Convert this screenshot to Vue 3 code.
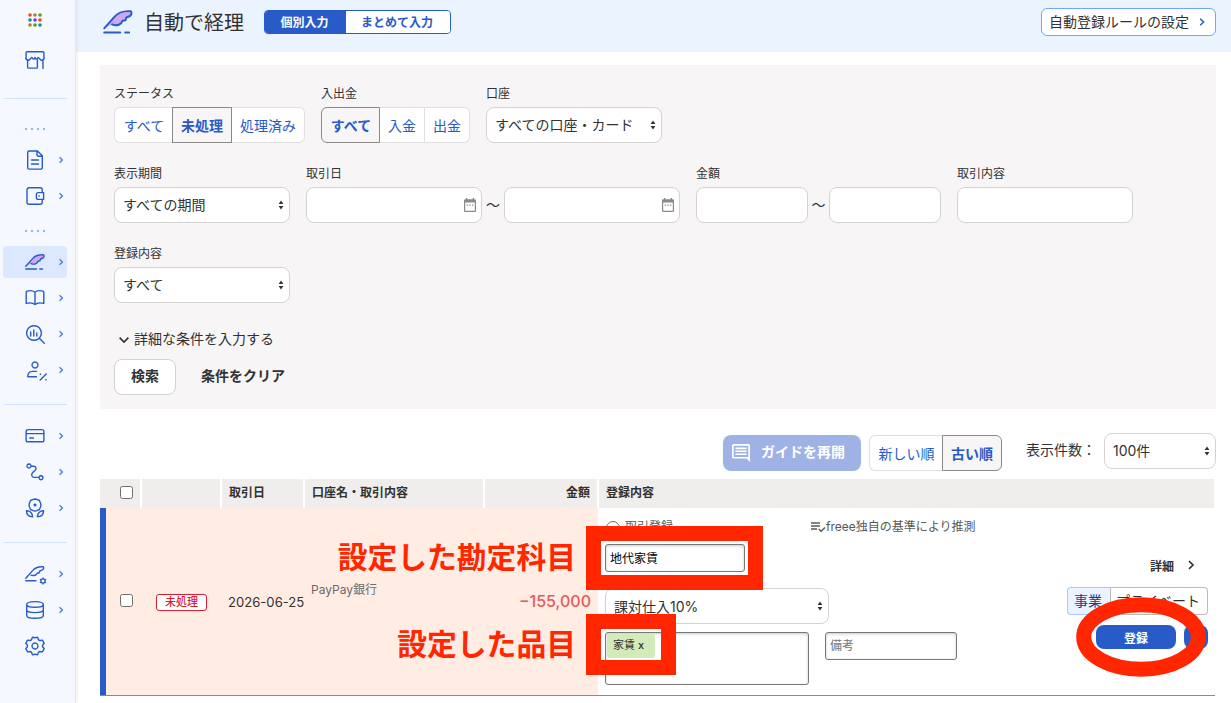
<template>
  <div class="app">
    <!-- ===== サイドバー ===== -->
    <nav class="sidebar">
      <svg class="launcher" viewBox="0 0 14 14">
        <circle v-for="(c, i) in dots" :key="i" :cx="2 + (i % 3) * 5" :cy="2 + Math.floor(i / 3) * 5" r="1.8" :fill="c" />
      </svg>
      <svg class="icon store" viewBox="0 0 20 20"><path :d="icons.store" /></svg>
      <hr />
      <template v-for="(group, g) in menu" :key="g">
        <div v-if="group.label" class="group-dots"><i v-for="n in 4" :key="n"></i></div>
        <hr v-else-if="g > 0" />
        <ul>
          <li v-for="name in group.items" :key="name" :class="{ active: name === 'pen' }">
            <svg class="icon" viewBox="0 0 20 20">
              <path :d="icons[name]" :class="{ wing: name === 'pen' }" />
              <path v-if="name === 'pen'" d="M.8 17h10.7M14.8 17h2.6" />
            </svg>
            <svg v-if="name !== 'gear'" class="arrow" viewBox="0 0 6 8"><path d="M1.6 1.2 4.4 4 1.6 6.8" /></svg>
          </li>
        </ul>
      </template>
    </nav>

    <div class="main">
      <!-- ===== ヘッダー ===== -->
      <header class="page-header">
        <svg class="icon logo" viewBox="0 0 20 20">
          <path :d="icons.pen" class="wing" />
          <path d="M.8 17h10.7M14.8 17h2.6" />
        </svg>
        <h1>自動で経理</h1>
        <div class="mode">
          <button
            v-for="m in modes"
            :key="m"
            :class="{ active: mode === m }"
            @click="mode = m"
          >{{ m }}</button>
        </div>
        <button class="rule-link">
          自動登録ルールの設定
          <svg class="arrow" viewBox="0 0 6 8"><path d="M1.2 .8 4.6 4 1.2 7.2" /></svg>
        </button>
      </header>

      <!-- ===== 検索条件 ===== -->
      <section class="filters">
        <div class="filter-row">
          <div class="field">
            <label>ステータス</label>
            <div class="segment">
              <button v-for="s in statuses" :key="s" :class="{ active: status === s }" @click="status = s">{{ s }}</button>
            </div>
          </div>
          <div class="field">
            <label>入出金</label>
            <div class="segment">
              <button v-for="s in flows" :key="s" :class="{ active: flow === s }" @click="flow = s">{{ s }}</button>
            </div>
          </div>
          <div class="field">
            <label>口座</label>
            <div class="select">すべての口座・カード<svg class="updown" viewBox="0 0 6 10"><path d="M3 .5 5.4 4H.6zM3 9.5 5.4 6H.6z" /></svg></div>
          </div>
        </div>

        <div class="filter-row">
          <div class="field">
            <label>表示期間</label>
            <div class="select">すべての期間<svg class="updown" viewBox="0 0 6 10"><path d="M3 .5 5.4 4H.6zM3 9.5 5.4 6H.6z" /></svg></div>
          </div>
          <div class="field">
            <label>取引日</label>
            <div class="range">
              <div class="select date"><svg class="cal" viewBox="0 0 12 14"><path :d="calendar" fill-rule="evenodd" /></svg></div>
              <span class="tilde">〜</span>
              <div class="select date"><svg class="cal" viewBox="0 0 12 14"><path :d="calendar" fill-rule="evenodd" /></svg></div>
            </div>
          </div>
          <div class="field">
            <label>金額</label>
            <div class="range">
              <input class="amount-input" type="text" />
              <span class="tilde narrow">〜</span>
              <input class="amount-input" type="text" />
            </div>
          </div>
          <div class="field">
            <label>取引内容</label>
            <input class="text-input" type="text" />
          </div>
        </div>

        <div class="filter-row">
          <div class="field">
            <label>登録内容</label>
            <div class="select">すべて<svg class="updown" viewBox="0 0 6 10"><path d="M3 .5 5.4 4H.6zM3 9.5 5.4 6H.6z" /></svg></div>
          </div>
        </div>

        <div class="more">
          <svg viewBox="0 0 12 8"><path d="M1.6 1.6 6 6l4.4-4.4" /></svg>
          詳細な条件を入力する
        </div>
        <div class="filter-actions">
          <button class="search">検索</button>
          <button class="clear">条件をクリア</button>
        </div>
      </section>

      <!-- ===== ツールバー ===== -->
      <div class="toolbar">
        <button class="guide">
          <svg viewBox="0 0 18 18"><path fill-rule="evenodd" d="M1.6 0h14.8Q18 0 18 1.6V18l-3.4-3.4h-13Q0 14.6 0 13V1.6Q0 0 1.6 0zM1.7 1.7v11.2h14.6V1.7zM3.4 3.6h11.2v1.6H3.4zM3.4 6.5h11.2v1.6H3.4zM3.4 9.4h11.2V11H3.4z" /></svg>
          ガイドを再開
        </button>
        <div class="segment">
          <button v-for="s in orders" :key="s" :class="{ active: order === s }" @click="order = s">{{ s }}</button>
        </div>
        <span class="count-label">表示件数：</span>
        <div class="select count">100件<svg class="updown" viewBox="0 0 6 10"><path d="M3 .5 5.4 4H.6zM3 9.5 5.4 6H.6z" /></svg></div>
      </div>

      <!-- ===== 明細テーブル ===== -->
      <div class="table">
        <div class="thead">
          <div class="check"><input type="checkbox" /></div>
          <div></div>
          <div>取引日</div>
          <div>口座名・取引内容</div>
          <div class="right">金額</div>
          <div>登録内容</div>
        </div>
        <div class="trow">
          <div class="check"><input type="checkbox" /></div>
          <div class="state"><span class="badge">未処理</span></div>
          <div class="date-cell">2026-06-25</div>
          <div class="bank">PayPay銀行</div>
          <div class="amount">−155,000</div>
          <div class="entry">
            <div class="entry-form">
              <div class="entry-top">
                <span class="radio"></span>
                <span class="kind">取引登録</span>
                <svg viewBox="0 0 16 12"><path d="M1 2h9M1 5h9M1 8h6M8.8 8l2.3 2.3L15 6.4" /></svg>
                <span>freee独自の基準により推測</span>
              </div>
              <input class="account" type="text" v-model="account" />
              <div class="select tax">課対仕入10%<svg class="updown" viewBox="0 0 6 10"><path d="M3 .5 5.4 4H.6zM3 9.5 5.4 6H.6z" /></svg></div>
              <div class="entry-bottom">
                <div class="tags"><span class="tag">家賃 <b>x</b></span></div>
                <input class="memo" type="text" placeholder="備考" />
              </div>
            </div>
            <div class="entry-side">
              <div class="detail">詳細<svg viewBox="0 0 8 10"><path d="M2 1.2 6 5 2 8.8" /></svg></div>
              <div class="owner"><span class="active">事業</span><span>プライベート</span></div>
              <div class="submit">
                <button class="register">登録</button>
                <button class="dropdown"></button>
              </div>
            </div>
          </div>

          <!-- 赤い注釈 -->
          <span class="note note-account">設定した勘定科目</span>
          <span class="note note-item">設定した品目</span>
          <span class="frame frame-account"></span>
          <span class="frame frame-item"></span>
          <svg class="ring" viewBox="0 0 130 80"><ellipse cx="65" cy="40" rx="57.3" ry="32.2" /></svg>
        </div>
      </div>
    </div>
  </div>
</template>

<script setup>
import { ref } from "vue";

/* ===== メニュー ===== */
const dots = ["#e0531f", "#b5801a", "#5a9a1e", "#0f9090", "#7a3fe0", "#e0531f", "#b5801a", "#5a9a1e", "#0f9090"];
const menu = [
  { label: true, items: ["doc", "wallet"] },
  { label: true, items: ["pen", "book", "report", "tax"] },
  { items: ["card", "route", "flower"] },
  { items: ["penGear", "db", "gear"] }
];

/* ===== アイコン ===== */
const icons = {
  store: "M2 1.8h16a.9.9 0 0 1 .9.9V7a2.1 2.1 0 0 1-4.2 1.8L13.2 7.4 11.8 9Q10.8 9.6 10 7.4 9.2 9.6 8.2 9L6.8 7.4 5.3 8.8A2.1 2.1 0 0 1 1.1 7V2.7a.9.9 0 0 1 .9-.9zM2.6 9.8v7.4a.9.9 0 0 0 .9.9h8a.9.9 0 0 0 .9-.9V9.8M18 9.4v9.2",
  doc: "M4 1h8.5L17.3 5.8V17.5a1.6 1.6 0 0 1-1.6 1.6H4.3a1.6 1.6 0 0 1-1.6-1.6V2.4A1.4 1.4 0 0 1 4 1zM12 1.2v3.6a1.4 1.4 0 0 0 1.4 1.4h3.7M6.5 10h7M6.5 14h7",
  wallet: "M17.2 6.6V3.8a2 2 0 0 0-2-2H4a2 2 0 0 0-2 2v12.4a2 2 0 0 0 2 2h11.2a2 2 0 0 0 2-2v-2.8M13.4 6.6h5.2v6.8h-5.2a2 2 0 0 1-2-2V8.6a2 2 0 0 1 2-2zM13.9 10h.3",
  pen: "M.8 14.2 7.6 6.6C9.8 4 13 2.4 18.4 2.8c1 .6.8 2-.4 3.2l-2.4 1-.6 1.8-2 .4c-.6 2.4-3.6 3.8-7 2.4",
  book: "M10 4.2C8.2 2.6 4.6 2.4 2 3.2q-.8.2-.8 1v11.2c3-.8 6.8-.6 8.8 1.2 2-1.8 5.8-2 8.8-1.2V4.2q0-.8-.8-1C15.4 2.4 11.8 2.6 10 4.2zM10 4.2v12.2",
  report: "M9 1.7a7.3 7.3 0 1 0 .01 0zM14.3 14.3l5 5M5.7 8v4M8.8 6v6M11.8 9v3",
  tax: "M10 2a3 3 0 1 0 .01 0zM11.5 11.4H7.4c-2.8 0-4.6 2-4.6 5.3h8.6M15.2 20l6-6M15.2 14.3h.4M20.8 19.8h.4",
  card: "M3 3.6h14a1.9 1.9 0 0 1 1.9 1.9v8.4a1.9 1.9 0 0 1-1.9 1.9H3a1.9 1.9 0 0 1-1.9-1.9V5.5A1.9 1.9 0 0 1 3 3.6zM1.2 7.6h17.6M4.8 12h3.6",
  route: "M4 2a2 2 0 1 0 .01 0zM16 13.7a2 2 0 1 0 .01 0zM6.2 4.2h2.4c2.6 0 3.2 3 1.2 4.6l-2 1.6c-2 1.8-1.2 5 1.6 5h4.4",
  flower: "M10 1l1.8.4 2.6 1.1 1.2 2.7.3 1.8-.3 1.8-1.2 2.7-2.6 1.1L10 13l-1.8-.4-2.6-1.1-1.2-2.7L4.1 7l.3-1.8 1.2-2.7 2.6-1.1zM10 6.1a.9.9 0 1 0 .01 0zM1.4 12.8c3.4-.2 6 2 6.2 6-3.4 0-6-2-6.2-6zM18.6 12.8c-3.4-.2-6 2-6.2 6 3.4 0 6-2 6.2-6z",
  penGear: "M.8 14.2 7.6 6.6C9.8 4 13 2.4 18.4 2.8c.8 1.2 0 2.6-1.6 3.4l-2 .8-.6 1.8-2 .4c-.6 1.8-3.2 3-6.2 2M.8 16.8h10.2M18 14.9a2.1 2.1 0 1 0 .01 0zM18 14v.9M18 19.1v.9M15.4 15.5l.8.5M19.8 18l.8.5M20.6 15.5l-.8.5M16.2 18l-.8.5",
  db: "M10 1.6c4.6 0 8.3 1.2 8.3 2.8S14.6 7.2 10 7.2 1.7 6 1.7 4.4 5.4 1.6 10 1.6zM1.7 4.4v11c0 1.6 3.7 2.8 8.3 2.8s8.3-1.2 8.3-2.8v-11M1.7 9.8c0 1.6 3.7 2.8 8.3 2.8s8.3-1.2 8.3-2.8",
  gear: "M7.4 1.2Q10 2.2 12.6 1.2L13.6 3.9 14.8 4.5 17.4 4.1 19.2 7.3 17.6 9.3V10.7L19.2 12.7 17.4 15.9 14.8 15.5 13.6 16.1 12.6 18.8Q10 17.8 7.4 18.8L6.4 16.1 5.2 15.5 2.6 15.9.8 12.7 2.4 10.7V9.3L.8 7.3 2.6 4.1 5.2 4.5 6.4 3.9zM10 7a3 3 0 1 0 .01 0z"
};
const calendar = "M2 0h1.4v1.3h5.2V0H10v1.3h.8q1.2 0 1.2 1.2v10.3q0 1.2-1.2 1.2H1.2Q0 14 0 12.8V2.5q0-1.2 1.2-1.2H2zM1.2 4.6v8.2h9.6V4.6zM2.6 6.4h1.3v1.3H2.6zM5.3 6.4h1.3v1.3H5.3zM8 6.4h1.3v1.3H8z";

/* ===== 検索条件 ===== */
const modes = ["個別入力", "まとめて入力"];
const mode = ref("個別入力");
const statuses = ["すべて", "未処理", "処理済み"];
const status = ref("未処理");
const flows = ["すべて", "入金", "出金"];
const flow = ref("すべて");
const orders = ["新しい順", "古い順"];
const order = ref("古い順");

const account = ref("地代家賃");
</script>

<style>
body {
  background: #fff;
  overflow: hidden;
}
</style>

<style scoped>
.app {
  display: flex;
  height: 703px;
  overflow: hidden;
  font-family: Inter, "Noto Sans CJK JP", sans-serif;
  font-size: 14px;
  color: #323232;
}

.app *,
.app *::before {
  box-sizing: border-box;
}

button,
input {
  font-family: inherit;
  margin: 0;
}

button {
  padding: 0;
  border: none;
  background: none;
  cursor: pointer;
  white-space: nowrap;
}

/* ===== サイドバー ===== */
.sidebar {
  width: 76px;
  flex: none;
  display: flex;
  flex-direction: column;
  background: #f5f8ff;
  border-right: 1px solid #dce8ff;
  box-shadow: 0 0 4px rgba(0, 0, 0, .12);
  z-index: 1;
}

.launcher {
  width: 14px;
  height: 14px;
  margin: 13px 0 0 28px;
}

.icon {
  width: 20px;
  height: 20px;
  fill: none;
  stroke: #285ac8;
  stroke-width: 1.4;
  stroke-linecap: round;
  stroke-linejoin: round;
  overflow: visible;
}

.wing {
  fill: #cda8f5;
}

.store {
  margin: 23px 0 0 25px;
}

.sidebar hr {
  width: 63px;
  height: 1px;
  margin: 18px 0 17px 4px;
  border: none;
  background: #d2e3ff;
}

.store + hr {
  margin: 28px 0 29px 4px;
}

.group-dots {
  display: flex;
  gap: 4px;
  height: 2px;
  margin-left: 25px;
}

.group-dots i {
  width: 2px;
  height: 2px;
  background: #8db5f8;
}

.sidebar ul {
  list-style: none;
  margin: 0 0 0 3px;
  padding: 0;
  display: flex;
  flex-direction: column;
  gap: 4px;
}

.group-dots + ul {
  margin-top: 14px;
}

ul + .group-dots {
  margin-top: 18px;
}

.sidebar hr + ul {
  margin-top: -2px;
}

.sidebar li {
  width: 64px;
  height: 32px;
  padding-left: 22px;
  display: flex;
  align-items: center;
  border-radius: 4px;
}

.sidebar li.active {
  background: #dce8ff;
}

.arrow {
  width: 6px;
  height: 8px;
  fill: none;
  stroke: #4b78de;
  stroke-width: 1.3;
}

li .arrow {
  margin-left: 13px;
}

/* ===== ヘッダー ===== */
.main {
  flex: 1;
  min-width: 0;
}

.page-header {
  height: 52px;
  padding: 0 15px 8px 27px;
  display: flex;
  align-items: center;
  background: #ebf3ff;
}

.logo {
  width: 30px;
  height: 30px;
  stroke-width: 1.3;
}

.page-header h1 {
  margin: 1px 20px 0 11px;
  width: 100px;
  font-size: 20px;
  line-height: 28px;
  font-weight: 400;
  white-space: nowrap;
}

.mode {
  display: flex;
  width: 187px;
  height: 24px;
  border: 1px solid #285ac8;
  border-radius: 4px;
  overflow: hidden;
}

.mode button {
  flex: 1;
  padding: 0 2px 2px 0;
  background: #fff;
  color: #285ac8;
  font-size: 12px;
  font-weight: 700;
}

.mode button:first-child {
  flex: 0 0 81px;
}

.mode .active {
  background: #285ac8;
  color: #fff;
}

.rule-link {
  width: 175px;
  height: 28px;
  margin-left: auto;
  padding: 0 10px 2px 7px;
  display: flex;
  align-items: center;
  justify-content: space-between;
  border: 1px solid #73a5ff;
  border-radius: 6px;
  background: #fff;
  color: #323232;
  font-size: 14px;
}

.rule-link .arrow {
  margin-top: 2px;
  stroke: #285ac8;
  stroke-width: 1.5;
}

/* ===== 検索条件 ===== */
.filters {
  height: 344px;
  margin: 13px 15px 0 24px;
  padding: 20px 14px 0;
  background: #f7f5f6;
}

.filter-row {
  display: flex;
  gap: 16px;
  margin-bottom: 21px;
}

.field label {
  display: block;
  height: 18px;
  margin-bottom: 4px;
  font-size: 12px;
  line-height: 18px;
}

.filter-row + .filter-row {
  padding-top: 1px;
}

.segment {
  display: flex;
}

.segment button {
  height: 36px;
  padding: 0 8px 1px;
  background: #fff;
  border: 1px solid #e1dfdf;
  border-left-width: 0;
  color: #285ac8;
  font-size: 14px;
}

.segment button:first-child {
  border-left-width: 1px;
  border-radius: 6px 0 0 6px;
}

.segment button:last-child {
  border-radius: 0 6px 6px 0;
}

.segment .active {
  background: #f7f5f5;
  border: 1px solid #8c8989;
  font-weight: 700;
}

.segment .active:first-child {
  padding-right: 7px;
  padding-left: 8px;
  min-width: 59px;
}

.segment button:has(+ .active) {
  padding-right: 7px;
  border-right: none;
  min-width: 58px;
}

.toolbar .segment button:has(+ .active) {
  min-width: 73px;
}

.select,
.amount-input,
.text-input {
  width: 176px;
  height: 36px;
  padding: 0 5px 2px 8px;
  display: flex;
  align-items: center;
  justify-content: space-between;
  background: #fff;
  border: 1px solid #d7d2d2;
  border-radius: 8px;
  white-space: nowrap;
}

.amount-input {
  width: 112px;
}

.updown {
  width: 6px;
  height: 10px;
  margin-top: 2px;
  fill: #323232;
}

.range {
  display: flex;
  align-items: center;
}

.tilde {
  width: 22px;
  text-align: center;
  line-height: 20px;
}

.tilde.narrow {
  width: 21px;
  padding-bottom: 1px;
}

.date {
  justify-content: flex-end;
  padding-bottom: 0;
}

.cal {
  width: 12px;
  height: 14px;
  fill: #8c8989;
}

.more {
  display: flex;
  align-items: center;
  height: 20px;
  margin-top: 26px;
  padding-left: 4px;
  line-height: 20px;
}

.more svg {
  width: 12px;
  height: 8px;
  margin: 2px 4px 0 0;
  fill: none;
  stroke: #323232;
  stroke-width: 1.6;
}

.filter-actions {
  display: flex;
  margin-top: 10px;
}

.filter-actions button {
  height: 36px;
  padding-bottom: 4px;
  font-size: 14px;
  font-weight: 700;
  color: #323232;
}

.filter-actions .search {
  width: 62px;
  margin-right: 25px;
  background: #fff;
  border: 1px solid #d7d2d2;
  border-radius: 8px;
}

/* ===== ツールバー ===== */
.toolbar {
  display: flex;
  align-items: flex-start;
  justify-content: flex-end;
  height: 46px;
  margin-top: 24px;
  padding-right: 15px;
}

.guide {
  display: flex;
  align-items: center;
  width: 138px;
  height: 36px;
  margin: 2px 8px 0 0;
  padding: 0 0 4px 9px;
  background: #9fb2e6;
  border-radius: 8px;
  color: #fff;
  font-size: 14px;
  font-weight: 700;
}

.guide svg {
  width: 18px;
  height: 18px;
  margin: 4px 11px 0 0;
  fill: #fff;
}

.toolbar .segment {
  margin-top: 2px;
}

.count-label {
  width: 78px;
  margin: 7px 0 0 24px;
  line-height: 20px;
  white-space: nowrap;
}

.count {
  width: 112px;
}

/* ===== テーブル ===== */
.table {
  width: 1115px;
  margin-left: 24px;
}

.thead {
  display: grid;
  grid-template-columns: 40px 78px 81px 178px 112px 615px;
  gap: 2px;
  height: 29px;
  font-size: 12px;
  font-weight: 700;
  line-height: 27px;
}

.thead > div {
  padding: 0 7px;
  background: #efeeec;
}

.thead .right {
  text-align: right;
}

.thead .check,
.trow .check {
  display: flex;
  align-items: center;
  padding: 0 0 0 20px;
}

.check input {
  appearance: none;
  width: 13px;
  height: 13px;
  background: #fff;
  border: 1px solid #6e6e6e;
  border-radius: 2.5px;
}

.thead .check {
  padding-bottom: 2px;
}

.trow {
  position: relative;
  display: grid;
  grid-template-columns: 41px 80px 83px 180px 114px 617px;
  height: 188px;
  border-bottom: 1px solid #8c8989;
  background: linear-gradient(to right, #285ac8 6px, #ffece3 6px, #ffece3 498px, #fff 498px);
}

.trow > div {
  display: flex;
  align-items: center;
  min-width: 0;
}

.trow .check {
  padding-bottom: 2px;
}

.state {
  padding: 2px 0 0 15px;
}

.badge {
  width: 51px;
  height: 17px;
  border: 1px solid #dc1e32;
  border-radius: 3px;
  background: #fff;
  color: #dc1e32;
  font-size: 11px;
  font-weight: 500;
  line-height: 15px;
  text-align: center;
}

.date-cell {
  padding-left: 7px;
  font-size: 13.1px;
  white-space: nowrap;
}

.bank {
  padding: 0 0 26px 7px;
  font-size: 12px;
  color: #6e6b6b;
}

.amount {
  justify-content: flex-end;
  padding: 0 7px 2px 0;
  font-size: 16px;
  font-weight: 500;
  color: #e65a5a;
}

.trow .entry {
  align-items: stretch;
  justify-content: space-between;
  padding: 10px 7px 0 7px;
}

.entry-top {
  display: flex;
  align-items: center;
  height: 18px;
  color: #595757;
  font-size: 12px;
  line-height: 18px;
}

.radio {
  width: 14px;
  height: 14px;
  margin: 1px 5px 0 1px;
  border: 1px solid #6e6b6b;
  border-radius: 50%;
}

.entry-top .kind {
  width: 185px;
}

.entry-top svg {
  width: 16px;
  height: 12px;
  fill: none;
  stroke: #595757;
  stroke-width: 1.4;
}

.account,
.memo,
.tags {
  border: 1px solid #7a7777;
  border-radius: 3px;
  background: #fff;
  box-shadow: inset 0 1px 3px rgba(0, 0, 0, .22);
}

.account {
  display: block;
  width: 140px;
  height: 28px;
  margin-top: 8px;
  padding: 0 4px 1px;
  font-size: 12px;
  color: #000;
}

.tax {
  width: 224px;
  margin-top: 16px;
  padding-bottom: 0;
}

.tax .updown {
  margin-top: 0;
}

.entry-bottom {
  display: flex;
  align-items: flex-start;
  gap: 16px;
  margin-top: 8px;
}

.tags {
  width: 204px;
  height: 53px;
  padding: 1px;
}

.tag {
  display: block;
  width: 48px;
  height: 24px;
  padding-left: 6px;
  border-radius: 3px;
  background: #d2ebb9;
  font-size: 11px;
  line-height: 22px;
}

.tag b {
  font-weight: 500;
}

.memo {
  width: 132px;
  height: 28px;
  padding: 0 4px 2px;
  font-size: 12px;
}

.memo::placeholder {
  color: #757575;
}

.entry-side {
  display: flex;
  flex-direction: column;
  align-items: flex-end;
  padding-top: 37px;
}

.detail {
  display: flex;
  align-items: center;
  height: 20px;
  padding-right: 13px;
  font-size: 12px;
  font-weight: 700;
}

.detail svg {
  width: 8px;
  height: 10px;
  margin-left: 13px;
  fill: none;
  stroke: #323232;
  stroke-width: 1.6;
}

.owner {
  display: flex;
  height: 28px;
  margin-top: 12px;
  line-height: 25px;
}

.owner span {
  width: 97px;
  padding-right: 2px;
  border: 1px solid #bebaba;
  border-left: none;
  border-radius: 0 4px 4px 0;
  text-align: center;
}

.owner .active {
  width: 44px;
  border: 1px solid #aac8ff;
  border-right-color: #bebaba;
  border-radius: 4px 0 0 4px;
  background: #ebf3ff;
  color: #1e3c8c;
}

.submit {
  display: flex;
  gap: 8px;
  margin-top: 10px;
}

.submit button {
  height: 24px;
  border-radius: 8px;
  background: #285ac8;
  color: #fff;
  font-size: 12px;
  font-weight: 700;
}

.register {
  width: 80px;
}

.dropdown {
  width: 24px;
}

/* ===== 注釈 ===== */
.note,
.frame,
.ring {
  position: absolute;
  pointer-events: none;
}

.note {
  right: 639px;
  color: #ff2600;
  font-size: 29.8px;
  font-weight: 700;
  line-height: 40px;
  white-space: nowrap;
}

.note-account {
  top: 29px;
}

.note-item {
  top: 116px;
}

.frame {
  left: 486.4px;
  border: 15px solid #ff2600;
}

.frame-account {
  top: 18.4px;
  width: 177px;
  height: 63.5px;
}

.frame-item {
  top: 106.4px;
  width: 90px;
  height: 60.5px;
}

.ring {
  left: 975.5px;
  top: 88.5px;
  width: 130px;
  height: 80px;
}

.ring ellipse {
  fill: none;
  stroke: #ff2600;
  stroke-width: 15;
}
</style>
